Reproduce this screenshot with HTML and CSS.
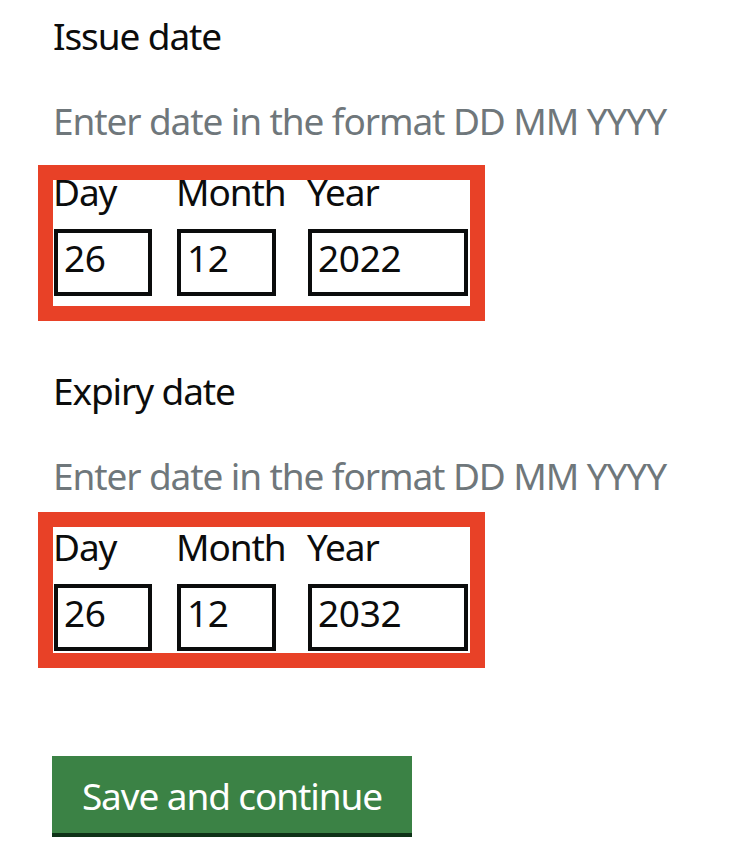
FILE: index.html
```html
<!DOCTYPE html>
<html lang="en">
<head>
<meta charset="utf-8">
<title>Dates</title>
<link rel="stylesheet" href="styles.css">
</head>
<body>
<main class="page">
  <div class="form-group">
    <label class="label">Issue date</label>
    <div class="hint">Enter date in the format DD MM YYYY</div>
    <div class="date-input">
      <div class="date-item">
        <label class="date-label">Day</label>
        <input class="input input--day" type="text" value="26">
      </div>
      <div class="date-item date-item--month">
        <label class="date-label">Month</label>
        <input class="input input--month" type="text" value="12">
      </div>
      <div class="date-item">
        <label class="date-label">Year</label>
        <input class="input input--year" type="text" value="2022">
      </div>
      <span class="highlight highlight--issue"></span>
    </div>
  </div>
  <div class="form-group">
    <label class="label">Expiry date</label>
    <div class="hint">Enter date in the format DD MM YYYY</div>
    <div class="date-input">
      <div class="date-item">
        <label class="date-label">Day</label>
        <input class="input input--day" type="text" value="26">
      </div>
      <div class="date-item date-item--month">
        <label class="date-label">Month</label>
        <input class="input input--month" type="text" value="12">
      </div>
      <div class="date-item">
        <label class="date-label">Year</label>
        <input class="input input--year" type="text" value="2032">
      </div>
      <span class="highlight highlight--expiry"></span>
    </div>
  </div>
  <button class="button" type="button">Save and continue</button>
</main>
</body>
</html>
```
FILE: styles.css
```css
body {
  margin: 0;
  background: #ffffff;
  color: #0b0c0c;
  font-family: "Noto Sans", "Open Sans", sans-serif;
  font-size: 37px;
  line-height: 50px;
  letter-spacing: -1.1px;
}

.page {
  padding: 11px 0 0 53px;
}

.form-group + .form-group {
  margin-top: 70px;
}

.label {
  display: block;
}

.hint {
  margin-top: 35px;
  color: #6f777b;
}

.date-input {
  position: relative;
  display: flex;
  gap: 24px;
  margin-top: 21px;
}

.date-item {
  display: flex;
  flex-direction: column;
  align-items: flex-start;
}

.date-item--month {
  width: 107px;
}

.date-label {
  display: block;
  margin-bottom: 12px;
  white-space: nowrap;
}

.input {
  box-sizing: border-box;
  height: 67px;
  margin: 0 0 0 1px;
  padding: 0 6px 10px;
  border: 4px solid #0b0c0c;
  border-radius: 0;
  background: #ffffff;
  color: #0b0c0c;
  font-family: inherit;
  font-size: 37px;
  letter-spacing: -0.3px;
  outline: none;
}

.input--day {
  width: 98px;
}

.input--month {
  width: 99px;
}

.input--year {
  width: 160px;
}

.highlight {
  position: absolute;
  left: -15px;
  width: 447px;
  height: 156px;
  box-sizing: border-box;
  border: 15px solid #e84127;
  pointer-events: none;
}

.highlight--issue {
  top: -2px;
}

.highlight--expiry {
  top: -10px;
}

.button {
  display: block;
  box-sizing: border-box;
  width: 360px;
  margin: 105px 0 0 -1px;
  padding: 15px 0 12px;
  border: 0;
  border-bottom: 4px solid #0e3217;
  border-radius: 0;
  background: #3b8245;
  color: #ffffff;
  font-family: inherit;
  font-size: 37px;
  line-height: 50px;
  letter-spacing: -1.1px;
  text-align: center;
}
```
